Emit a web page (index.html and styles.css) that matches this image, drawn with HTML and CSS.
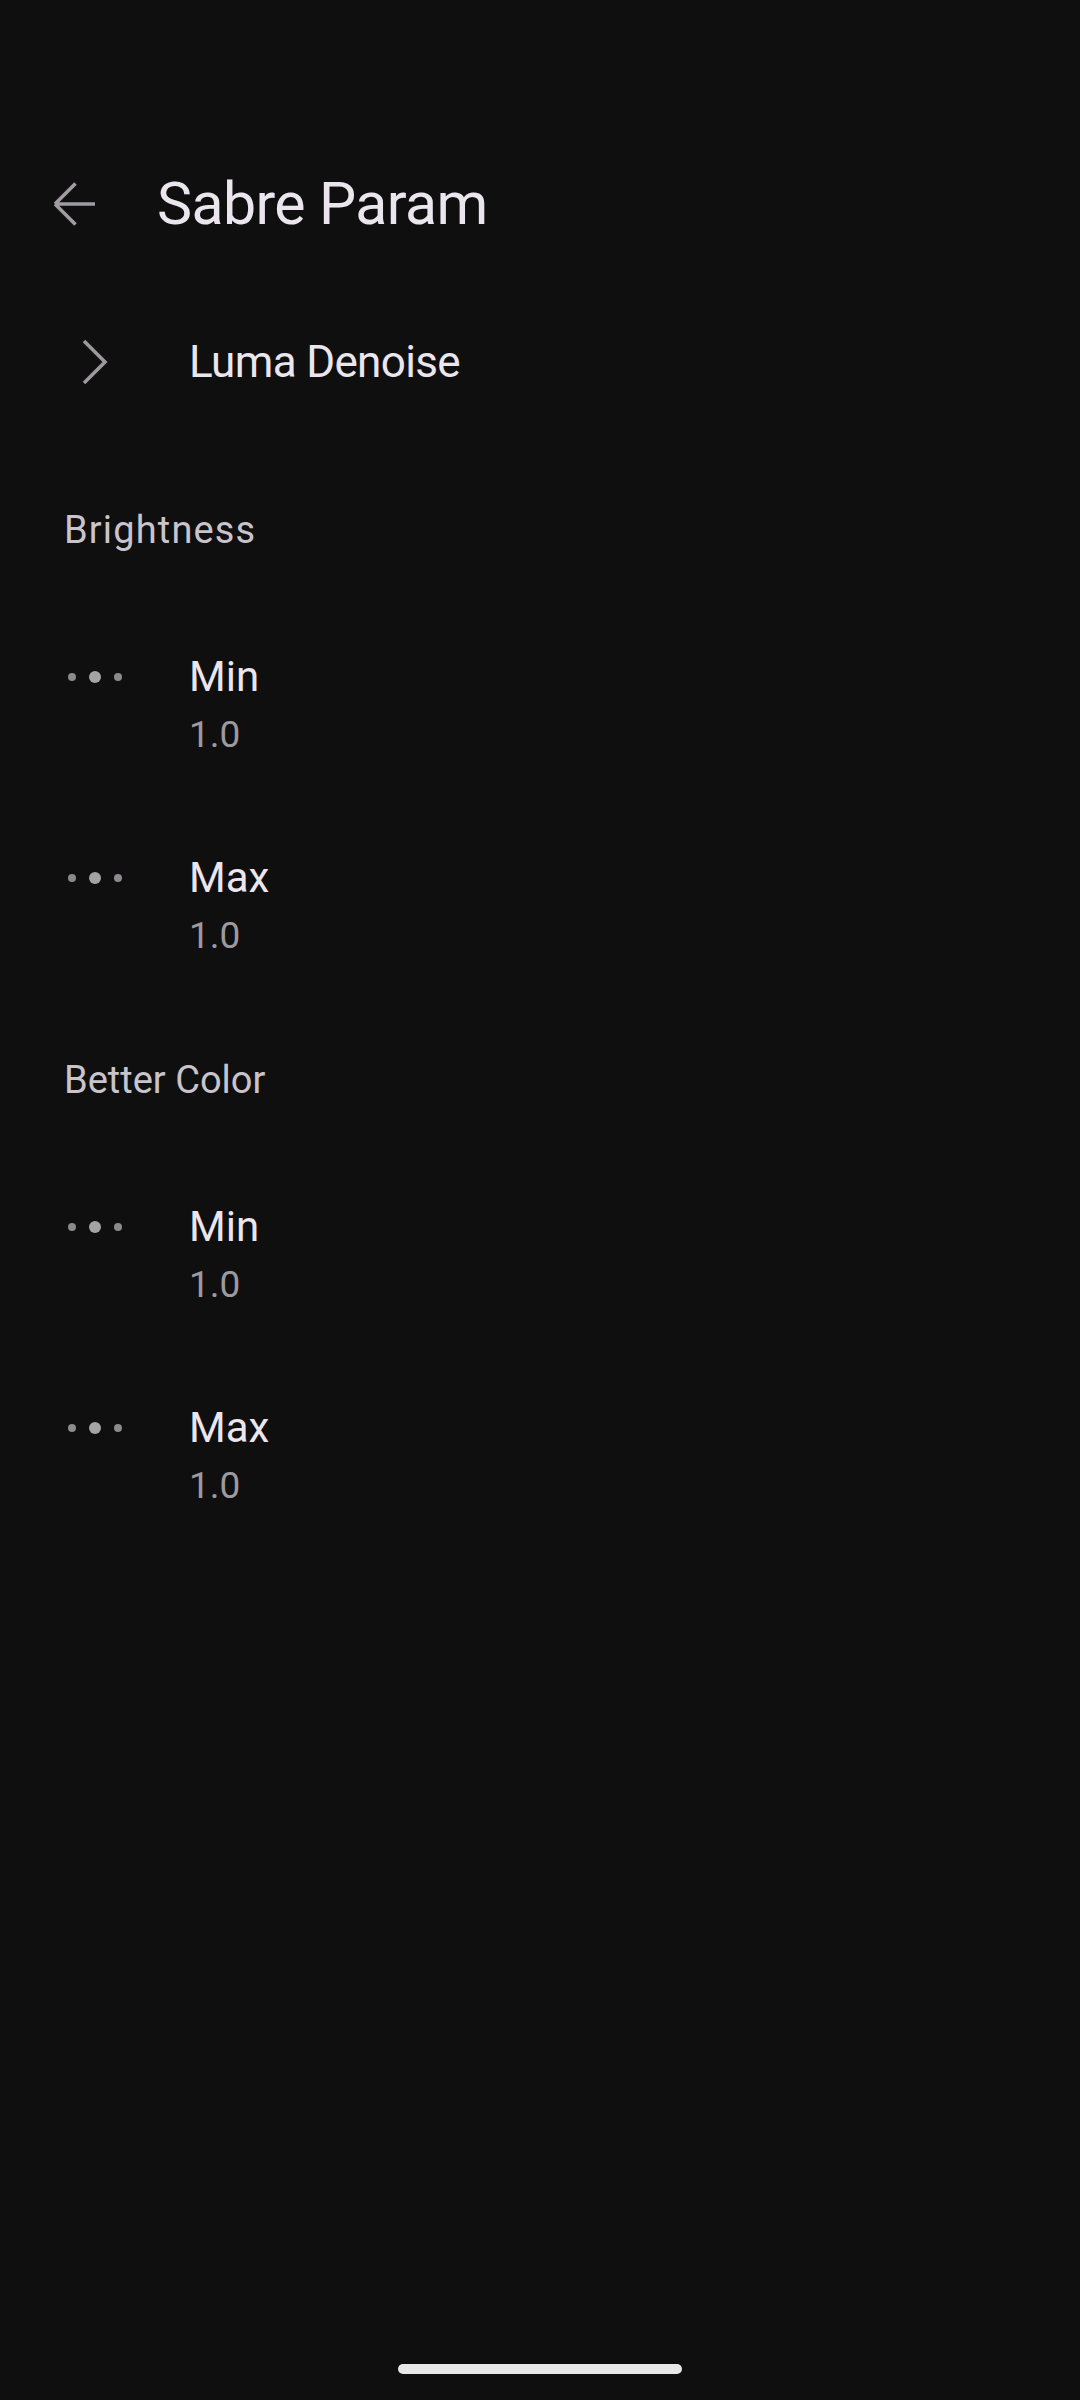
FILE: index.html
```html
<!DOCTYPE html>
<html lang="en">
<head>
	<meta charset="UTF-8">
	<title>Sabre Param</title>
	<link rel="stylesheet" href="styles.css">
</head>
<body>
	<div class="screen">
		<div class="status-bar"></div>

		<div class="app-bar">
			<div class="back-btn">
				<svg width="48" height="48" viewBox="0 0 48 48">
					<path d="M4 24H44M4 24L24.5 3.5M4 24L24.5 44.5" fill="none" stroke="#a09ca2" stroke-width="3.6"/>
				</svg>
			</div>
			<div class="app-title">Sabre Param</div>
		</div>

		<div class="main">
			<div class="nav-row">
				<div class="nav-icon">
					<svg width="30" height="46" viewBox="0 0 30 46">
						<path d="M4 2L25 23L4 44" fill="none" stroke="#9c989d" stroke-width="3.6"/>
					</svg>
				</div>
				<div class="nav-title">Luma Denoise</div>
			</div>

			<div class="group-title wide">Brightness</div>

			<div class="pref">
				<div class="pref-icon">
					<svg width="56" height="14" viewBox="0 0 56 14"><circle cx="5" cy="7" r="4" fill="#8d898e"/><circle cx="28" cy="7" r="6" fill="#a6a2a7"/><circle cx="51" cy="7" r="4" fill="#8d898e"/></svg>
				</div>
				<div class="pref-text">
					<div class="pref-title">Min</div>
					<div class="pref-value">1.0</div>
				</div>
			</div>

			<div class="pref">
				<div class="pref-icon">
					<svg width="56" height="14" viewBox="0 0 56 14"><circle cx="5" cy="7" r="4" fill="#8d898e"/><circle cx="28" cy="7" r="6" fill="#a6a2a7"/><circle cx="51" cy="7" r="4" fill="#8d898e"/></svg>
				</div>
				<div class="pref-text">
					<div class="pref-title">Max</div>
					<div class="pref-value">1.0</div>
				</div>
			</div>

			<div class="group-title">Better Color</div>

			<div class="pref">
				<div class="pref-icon">
					<svg width="56" height="14" viewBox="0 0 56 14"><circle cx="5" cy="7" r="4" fill="#8d898e"/><circle cx="28" cy="7" r="6" fill="#a6a2a7"/><circle cx="51" cy="7" r="4" fill="#8d898e"/></svg>
				</div>
				<div class="pref-text">
					<div class="pref-title">Min</div>
					<div class="pref-value">1.0</div>
				</div>
			</div>

			<div class="pref">
				<div class="pref-icon">
					<svg width="56" height="14" viewBox="0 0 56 14"><circle cx="5" cy="7" r="4" fill="#8d898e"/><circle cx="28" cy="7" r="6" fill="#a6a2a7"/><circle cx="51" cy="7" r="4" fill="#8d898e"/></svg>
				</div>
				<div class="pref-text">
					<div class="pref-title">Max</div>
					<div class="pref-value">1.0</div>
				</div>
			</div>
		</div>

		<div class="gesture-bar">
			<div class="handle"></div>
		</div>
	</div>
</body>
</html>
```

FILE: styles.css
```css
html, body{
	margin: 0;
	padding: 0;
	background: #0f0f0f;
}
.screen{
	width: 1080px;
	height: 2400px;
	display: flex;
	flex-direction: column;
	font-family: Roboto, "Noto Sans", sans-serif;
	color: #e8e3ea;
}
.status-bar{
	height: 140px;
}
.app-bar{
	height: 128px;
	display: flex;
	align-items: center;
}
.back-btn{
	width: 48px;
	height: 48px;
	margin-left: 51px;
	display: flex;
}
.app-title{
	margin-left: 58px;
	font-size: 59px;
	line-height: 72px;
	letter-spacing: -0.6px;
	color: #ebe6ed;
}
.main{
	flex: 1;
}
.nav-row{
	height: 188px;
	display: flex;
	align-items: center;
	padding-left: 67px;
}
.nav-icon{
	width: 56px;
	display: flex;
	justify-content: center;
}
.nav-title{
	margin-left: 66px;
	font-size: 44px;
	line-height: 56px;
	letter-spacing: -0.65px;
	color: #ebe6ed;
}
.group-title{
	padding: 50px 0 50px 64px;
	font-size: 38px;
	line-height: 48px;
	color: #c9c3cc;
}
.group-title.wide{
	letter-spacing: 1.15px;
}
.pref{
	display: flex;
	align-items: flex-start;
	padding: 46px 0 43px 64px;
}
.pref-icon{
	width: 62px;
	height: 54px;
	display: flex;
	align-items: center;
	justify-content: center;
}
.pref-text{
	margin-left: 63px;
}
.pref-title{
	font-size: 42px;
	line-height: 54px;
	color: #ebe6ed;
}
.pref-value{
	margin-top: 4px;
	font-size: 37px;
	line-height: 54px;
	color: #9d999f;
}
.gesture-bar{
	display: flex;
	justify-content: center;
	padding-bottom: 26px;
}
.handle{
	width: 284px;
	height: 10px;
	border-radius: 5px;
	background: #e8e8e8;
}
```
